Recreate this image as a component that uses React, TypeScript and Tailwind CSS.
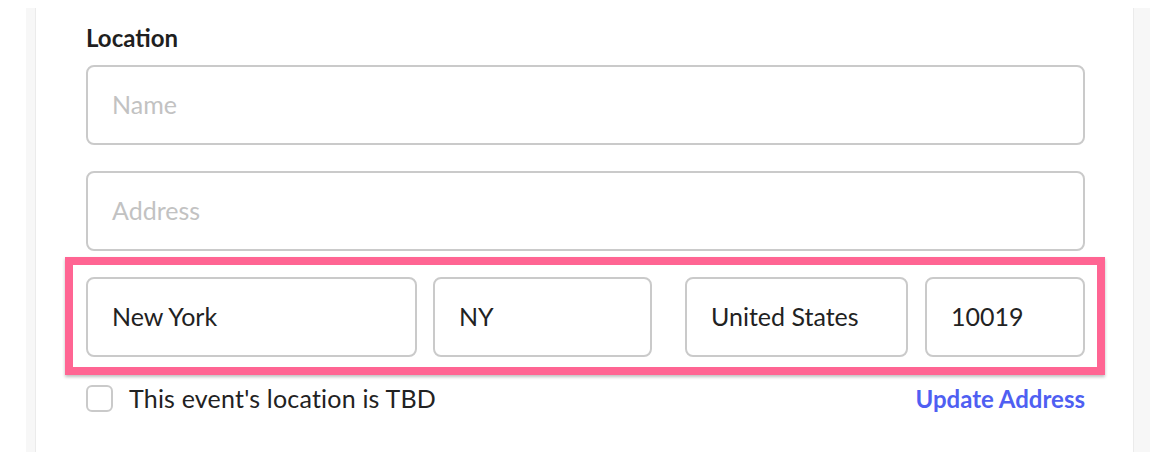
const font = { fontFamily: 'Lato, "Open Sans", sans-serif' }

function Field({ value, placeholder, className = '' }: { value?: string; placeholder?: string; className?: string }) {
  return (
    <div
      className={`h-[80px] flex items-center px-[24px] border-2 border-[#cacaca] rounded-[8px] bg-white text-[25px] ${className}`}
    >
      {value ? (
        <span className="text-[#222222]">{value}</span>
      ) : (
        <span className="text-[#c2c2c2]">{placeholder}</span>
      )}
    </div>
  )
}

export default function App() {
  return (
    <div className="w-[1150px] h-[463px] bg-white pt-[8px]" style={font}>
      <div className="flex h-[444px]">
        <div className="w-[26px] bg-white" />
        <div className="w-[10px] bg-[#f7f7f7] border-r border-[#ebebeb]" />
        <div className="w-[1097px] bg-white pl-[50px] pr-[48px] pt-[15px]">
          <h3 className="text-[24px] font-bold text-[#1f1f1f] leading-[30px] h-[42px]">Location</h3>

          <Field placeholder="Name" className="w-full" />
          <Field placeholder="Address" className="w-full mt-[26px]" />

          <div className="-ml-[21px] -mr-[20px] mt-[6px] border-[8px] border-[#ff6593] shadow-[0_2px_3px_rgba(0,0,0,0.25)] pt-[12px] pb-[10px] pl-[13px] pr-[12px]">
            <div className="flex">
              <Field value="New York" className="w-[331px]" />
              <Field value="NY" className="w-[219px] ml-[16px]" />
              <Field value="United States" className="w-[223px] ml-[33px]" />
              <Field value="10019" className="w-[160px] ml-[17px]" />
            </div>
          </div>

          <div className="flex items-center justify-between mt-[5px]">
            <label className="flex items-center gap-[16px] text-[25px] text-[#222222] tracking-[0.2px]">
              <span className="w-[27px] h-[27px] border-2 border-[#cacaca] rounded-[6px] bg-white" />
              This event's location is TBD
            </label>
            <a className="text-[24px] font-bold text-[#4f5ff2]">Update Address</a>
          </div>
        </div>
        <div className="flex-1 bg-[#f7f7f7] border-l border-[#ebebeb]" />
      </div>
    </div>
  )
}
